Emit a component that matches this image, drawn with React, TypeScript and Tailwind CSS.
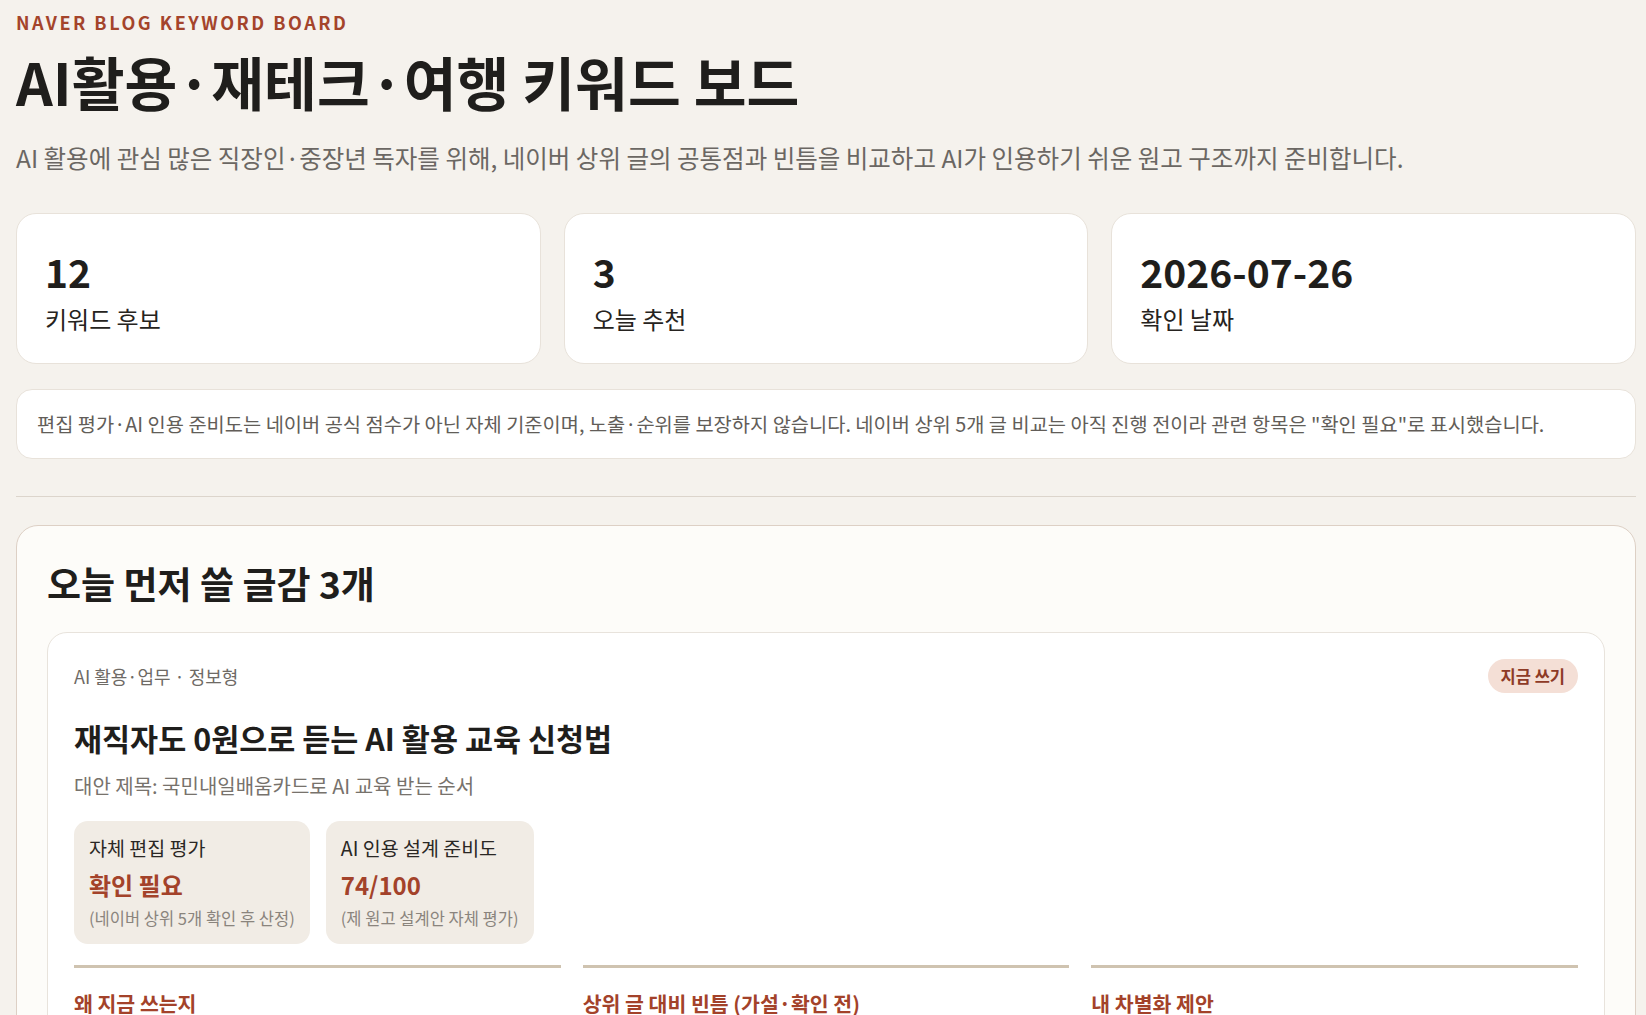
const stats = [
  { value: "12", label: "키워드 후보" },
  { value: "3", label: "오늘 추천" },
  { value: "2026-07-26", label: "확인 날짜" },
];

const scores = [
  { title: "자체 편집 평가", value: "확인 필요", note: "(네이버 상위 5개 확인 후 산정)" },
  { title: "AI 인용 설계 준비도", value: "74/100", note: "(제 원고 설계안 자체 평가)" },
];

const columns = [
  {
    title: "왜 지금 쓰는지",
    body: "하반기 국민내일배움카드 AI 과정 모집이 시작되면서 재직자 검색이 늘어나는 시기입니다.",
  },
  {
    title: "상위 글 대비 빈틈 (가설·확인 전)",
    body: "상위 글은 과정 목록 위주라 재직자 신청 자격과 순서를 한눈에 정리한 글이 적을 것으로 보입니다.",
  },
  {
    title: "내 차별화 제안",
    body: "신청 단계별 체크리스트와 직장인 일정에 맞춘 수강 팁을 표로 정리합니다.",
  },
];

export default function App() {
  return (
    <div className="min-h-screen bg-[#f5f2ed] pl-4 pr-[10px] pt-[10px] pb-10 font-['Noto_Sans_CJK_KR','Noto_Sans',sans-serif] text-[#1f1e1c]">
      <p className="text-[18px] leading-[24px] font-bold tracking-[0.14em] text-[#a4442b]">
        NAVER BLOG KEYWORD BOARD
      </p>
      <h1 className="mt-[13px] text-[57.4px] leading-[1.2] font-bold">AI활용·재테크·여행 키워드 보드</h1>
      <p className="mt-[22px] text-[24.5px] leading-[1.6] text-[#6b6763]">
        AI 활용에 관심 많은 직장인·중장년 독자를 위해, 네이버 상위 글의 공통점과 빈틈을 비교하고 AI가 인용하기 쉬운 원고 구조까지 준비합니다.
      </p>

      <div className="mt-[36px] grid grid-cols-3 gap-[23px]">
        {stats.map((s) => (
          <div key={s.label} className="rounded-[20px] border border-[#e8e2da] bg-white px-7 pt-[33px] pb-7">
            <div className="text-[39px] leading-[48px] font-bold">{s.value}</div>
            <div className="mt-[7px] text-[24px] leading-[33px] text-[#262320]">{s.label}</div>
          </div>
        ))}
      </div>

      <div className="mt-[25px] rounded-[16px] border border-[#e8e2da] bg-white px-5 py-[19px] text-[19.8px] leading-[30px] text-[#625d58]">
        편집 평가·AI 인용 준비도는 네이버 공식 점수가 아닌 자체 기준이며, 노출·순위를 보장하지 않습니다. 네이버 상위 5개 글 비교는 아직 진행 전이라 관련 항목은 "확인 필요"로 표시했습니다.
      </div>

      <hr className="mt-[37px] border-0 border-t border-[#dcd5cc]" />

      <section className="mt-7 rounded-[22px] border border-[#ddd0c5] bg-[#fdfcf9] px-[30px] pt-[35px] pb-8">
        <h2 className="text-[37px] leading-[44px] font-bold">오늘 먼저 쓸 글감 3개</h2>

        <article className="mt-[27px] rounded-[20px] border border-[#e8e3dc] bg-white p-[26px]">
          <div className="flex items-center justify-between">
            <span className="text-[18px] text-[#6e6a65]">AI 활용·업무 · 정보형</span>
            <span className="flex h-[34px] items-center rounded-full bg-[#f4dfd6] px-[13px] text-[16.5px] font-bold text-[#8e3a26]">
              지금 쓰기
            </span>
          </div>

          <h3 className="mt-[25px] text-[30.5px] leading-[40px] font-bold">재직자도 0원으로 듣는 AI 활용 교육 신청법</h3>
          <p className="mt-[13px] text-[20px] leading-[30px] text-[#77726c]">대안 제목: 국민내일배움카드로 AI 교육 받는 순서</p>

          <div className="mt-5 flex gap-4">
            {scores.map((s) => (
              <div key={s.title} className="rounded-[14px] bg-[#f1ece5] px-[15px] pt-[13px] pb-[14px]">
                <div className="text-[19.5px] leading-[28px] text-[#2a2724]">{s.title}</div>
                <div className="mt-[7px] text-[24px] leading-[31px] font-bold text-[#a3422a]">{s.value}</div>
                <div className="mt-[7px] text-[16.5px] leading-[23px] text-[#8a847d]">{s.note}</div>
              </div>
            ))}
          </div>

          <div className="mt-[21px] grid grid-cols-3 gap-[22px]">
            {columns.map((c) => (
              <div key={c.title} className="border-t-[3px] border-[#cfc3b0] pt-5">
                <h4 className="text-[20.5px] leading-[30px] font-bold text-[#a3422a]">{c.title}</h4>
                <p className="mt-2 text-[18px] leading-[1.7] text-[#4a4641]">{c.body}</p>
              </div>
            ))}
          </div>
        </article>
      </section>
    </div>
  );
}
